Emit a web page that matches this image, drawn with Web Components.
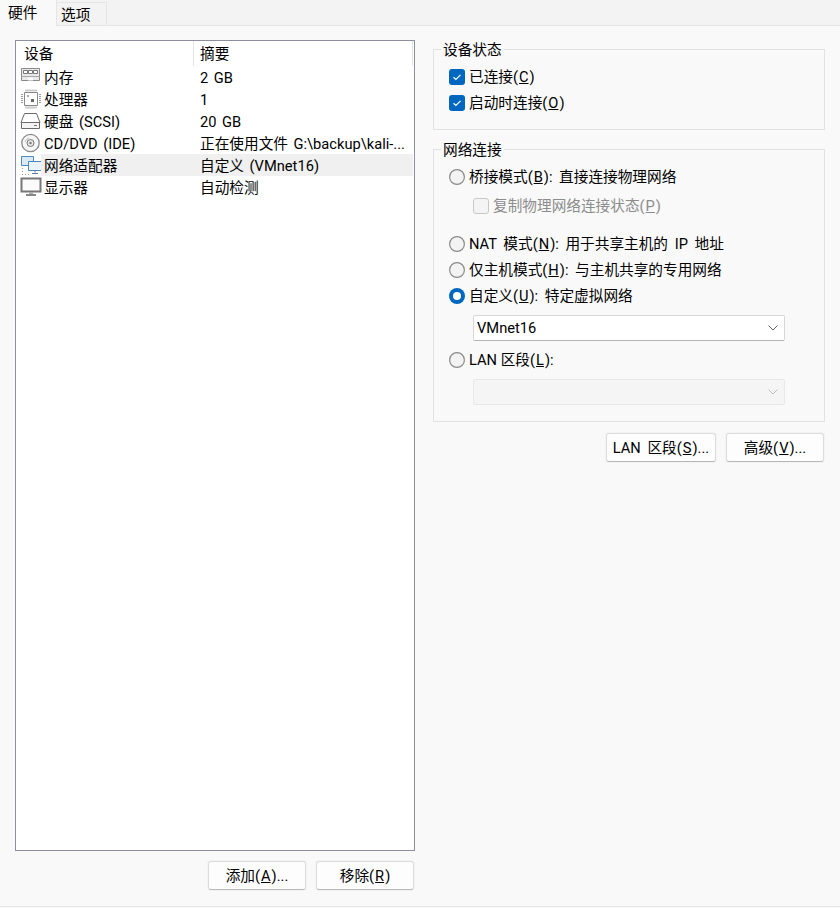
<!DOCTYPE html>
<html lang="zh-CN">
<head>
<meta charset="utf-8">
<style>
  html, body { margin: 0; height: 908px; overflow: hidden; background: #f9f9f9; }
</style>
</head>
<body>
<vm-settings></vm-settings>

<script>
const FONT = `14.67px/22px Roboto, "Noto Sans CJK SC", sans-serif`;

// underlined access key, written as _X in labels
function keyed(label) {
  return label.replace(/_(.)/g, '<u style="margin:0 1px">$1</u>');
}

class VmTabs extends HTMLElement {
  connectedCallback() {
    this.attachShadow({ mode: 'open' }).innerHTML = `
      <style>
        :host { display: flex; height: 26px; box-sizing: border-box; border-bottom: 1px solid #e5e5e5; background: #f3f3f3; font: ${FONT}; }
        span { box-sizing: border-box; display: block; }
        .on { width: 57px; height: 26px; background: #f9f9f9; padding: 2px 0 0 8px; border-right: 1px solid #e5e5e5; }
        .off { width: 50px; height: 23px; margin-top: 2px; padding: 1px 0 0 4px; background: #f3f3f3; border: 1px solid #e5e5e5; border-width: 1px 1px 0 0; }
      </style>
      <span class="on">硬件</span><span class="off">选项</span>`;
  }
}

const ICONS = {
  ram: `<path d="M1.500 1.500h18v12h-18z" fill="#e9e9e9" stroke="#8a8a8a"/>
    <path d="M3.500 3.500h4v3h-4zM8.500 3.500h4v3h-4zM13.500 3.500h4v3h-4z" fill="#fff" stroke="#777"/>
    <path d="M1.500 9.500h18" stroke="#a8a8a8"/><path d="M8 10.500h5v3H8z" fill="#fff"/>`,
  cpu: `<path d="M4.500 3.500h13v13h-13z" fill="#fff" stroke="#8a8a8a"/>
    <path d="M6 .5v2M8 .5v2M10 .5v2M12 .5v2M14 .5v2M16 .5v2M6 17.500v2M8 17.500v2M10 17.500v2M12 17.500v2M14 17.500v2M16 17.500v2M1 5.500h2M1 7.500h2M1 9.500h2M1 11.500h2M1 13.500h2M19 5.500h2M19 7.500h2M19 9.500h2M19 11.500h2M19 13.500h2" stroke="#9a9a9a" fill="none"/>
    <path d="M7 6h2v2H7z" fill="#aaa"/><path d="M11 10h3v3h-3z" fill="#666"/>`,
  disk: `<path d="M4.500 2.500h12l3.500 9H1z" fill="#fff" stroke="#6a6a6a"/>
    <path d="M1.500 11.500h18v6h-18z" fill="#f4f4f4" stroke="#6a6a6a" stroke-linejoin="round"/>
    <path d="M14 14.500h3" stroke="#777"/>`,
  cd: `<circle cx="10.500" cy="10" r="8.700" fill="#f6f6f6" stroke="#8a8a8a" stroke-width="1.300"/>
    <circle cx="10.500" cy="10" r="3.500" fill="#e8e8e8" stroke="#777"/>
    <circle cx="10.500" cy="10" r="1.200" fill="#777"/>
    <path d="M5 9a6 6 0 0 1 4-4" fill="none" stroke="#bbb"/>`,
  net: `<path d="M1.500 1.500h12v9h-12z" fill="#dbeaf7" stroke="#4c88bb"/>
    <path d="M8.500 6.500h13v9h-13z" fill="#eaf3fb" stroke="#4c88bb"/>
    <path d="M15 15.500v2M12 18.500h6" stroke="#5b7f9d"/>
    <path d="M2 13.500h1M2 16.500h1M2 19.500h1M5 19.500h1M8 19.500h1" stroke="#999"/>`,
  monitor: `<path d="M1.500 1.500h19v13h-19z" fill="#fbfbfb" stroke="#777" stroke-width="2"/>
    <path d="M6 18h10" stroke="#888" stroke-width="2"/><path d="M9 15.500h4v1.500H9z" fill="#aaa"/>`
};

class VmDeviceRow extends HTMLElement {
  connectedCallback() {
    const icon = this.getAttribute('icon');
    this.attachShadow({ mode: 'open' }).innerHTML = `
      <style>
        :host { display: flex; height: 22px; font: ${FONT}; line-height: 24px; word-spacing: 2px; white-space: nowrap; }
        svg { width: 22px; height: 20px; margin: 1px -1px 0 4px; flex: none; }
        .name { width: 151px; flex: none; padding-left: 3px; box-sizing: border-box; }
        .value { padding-left: 8px; flex: 1; margin-right: 1px; }
        .name, .value { overflow: hidden; }
        :host([selected]) .name, :host([selected]) .value { background: #f0f0f0; }
      </style>
      <svg viewBox="0 0 22 20">${ICONS[icon]}</svg>
      <span class="name"><slot name="name"></slot></span>
      <span class="value"><slot name="value"></slot></span>`;
  }
}

class VmDeviceList extends HTMLElement {
  connectedCallback() {
    this.attachShadow({ mode: 'open' }).innerHTML = `
      <style>
        :host { display: block; box-sizing: border-box; width: 400px; height: 811px; background: #fff; border: 1px solid #8e8f9e; font: ${FONT}; }
        .head { display: flex; height: 25px; line-height: 26px; }
        .head span { display: block; }
        .a { width: 178px; padding-left: 8px; box-sizing: border-box; border-right: 1px solid #e5e5e5; height: 25px; }
        .b { padding-left: 6px; flex: 1; }
        .edge { width: 1px; height: 25px; background: #e5e5e5; margin-right: 1px; }
      </style>
      <div class="head"><span class="a">设备</span><span class="b">摘要</span><i class="edge"></i></div>
      <slot></slot>`;
  }
}

class VmGroup extends HTMLElement {
  connectedCallback() {
    this.attachShadow({ mode: 'open' }).innerHTML = `
      <style>
        :host { display: block; position: relative; box-sizing: border-box; border: 1px solid #e2e2e2; font: ${FONT}; }
        .title { position: absolute; left: 7px; top: -11px; padding: 0 2px; background: #f9f9f9; }
      </style>
      <span class="title">${this.getAttribute('label')}</span>
      <slot></slot>`;
  }
}

class VmCheck extends HTMLElement {
  connectedCallback() {
    const on = this.hasAttribute('checked');
    this.attachShadow({ mode: 'open' }).innerHTML = `
      <style>
        :host { display: flex; align-items: center; height: 22px; gap: 4px; font: ${FONT}; }
        :host([disabled]) { color: #8c8c8c; }
        i { width: 16px; height: 16px; box-sizing: border-box; border-radius: 3px; flex: none; display: block; }
        .on { background: #0067c0; }
        .off { background: #f4f4f4; border: 1px solid #c8c8c8; }
        svg { display: block; }
      </style>
      <i class="${on ? 'on' : 'off'}">${on ? '<svg width="16" height="16" viewBox="0 0 16 16"><path d="M4.500 8.200l2.400 2.300 4.600-4.700" fill="none" stroke="#fff" stroke-width="1.200"/></svg>' : ''}</i>
      <span>${keyed(this.getAttribute('label'))}</span>`;
  }
}

class VmRadio extends HTMLElement {
  connectedCallback() {
    const on = this.hasAttribute('checked');
    this.attachShadow({ mode: 'open' }).innerHTML = `
      <style>
        :host { display: flex; align-items: center; height: 22px; gap: 4px; font: ${FONT}; word-spacing: 3px; white-space: pre; }
        svg { flex: none; display: block; }
      </style>
      <svg width="16" height="16" viewBox="0 0 16 16">${on
        ? '<circle cx="8" cy="8" r="8" fill="#0067c0"/><circle cx="8" cy="8" r="4" fill="#fff"/>'
        : '<circle cx="8" cy="8" r="7.400" fill="#f3f3f3" stroke="#8a8a8a" stroke-width="1.200"/>'}</svg>
      <span>${keyed(this.getAttribute('label'))}</span>`;
  }
}

class VmCombo extends HTMLElement {
  connectedCallback() {
    this.attachShadow({ mode: 'open' }).innerHTML = `
      <style>
        :host { display: flex; align-items: center; justify-content: space-between; box-sizing: border-box; width: 312px; height: 26px; padding: 0 5px 0 3px; background: #fff; border: 1px solid #d8d8d8; border-bottom-color: #b5b5b5; border-radius: 2px; font: ${FONT}; line-height: 24px; }
        :host([disabled]) { background: #f5f5f5; border-color: #e8e8e8; }
        :host([disabled]) path { stroke: #bdbdbd; }
        svg { display: block; }
      </style>
      <span><slot></slot></span>
      <svg width="12" height="12" viewBox="0 0 12 12"><path d="M1.500 3.500L6 8l4.500-4.500" fill="none" stroke="#606060"/></svg>`;
  }
}

class VmButton extends HTMLElement {
  connectedCallback() {
    this.attachShadow({ mode: 'open' }).innerHTML = `
      <style>
        :host { display: flex; align-items: center; justify-content: center; box-sizing: border-box; height: 29px; background: #fdfdfd; border: 1px solid #dcdcdc; border-bottom-color: #b8b8b8; border-radius: 3px; box-shadow: 0 0 0 1px #f3f3f3; font: ${FONT}; word-spacing: 3px; white-space: pre; }
      </style>
      <span>${keyed(this.getAttribute('label'))}</span>`;
  }
}

class VmSettings extends HTMLElement {
  connectedCallback() {
    this.attachShadow({ mode: 'open' }).innerHTML = `
      <style>
        :host { display: block; height: 908px; box-sizing: border-box; background: #f9f9f9; font: ${FONT}; }
        .body { display: flex; height: 881px; box-sizing: border-box; padding: 14px 16px 0 15px; border-bottom: 1px solid #e5e5e5; }
        .left { width: 400px; flex: none; }
        .right { width: 392px; margin-left: 18px; flex: none; padding-top: 9px; }
        .actions { display: flex; justify-content: flex-end; gap: 10px; }
        .left .actions { margin: 10px 1px 0 0; }
        .right .actions { margin: 11px 1px 0 0; }
        vm-button { width: 98px; }
        .status { height: 81px; padding: 16px 15px 0; }
        .status vm-check + vm-check { margin-top: 4px; }
        .net { height: 273px; margin-top: 19px; padding: 16px 15px 0; }
        .net vm-radio { margin-bottom: 4px; }
        .sub { margin: 7px 0 16px 24px; }
        .net vm-combo { margin: 8px 0 8px 24px; }
      </style>
      <vm-tabs></vm-tabs>
      <div class="body">
        <div class="left">
          <vm-device-list>
            <vm-device-row icon="ram"><span slot="name">内存</span><span slot="value">2 GB</span></vm-device-row>
            <vm-device-row icon="cpu"><span slot="name">处理器</span><span slot="value">1</span></vm-device-row>
            <vm-device-row icon="disk"><span slot="name">硬盘 (SCSI)</span><span slot="value">20 GB</span></vm-device-row>
            <vm-device-row icon="cd"><span slot="name">CD/DVD (IDE)</span><span slot="value">正在使用文件 G:\\backup\\kali-...</span></vm-device-row>
            <vm-device-row icon="net" selected><span slot="name">网络适配器</span><span slot="value">自定义 (VMnet16)</span></vm-device-row>
            <vm-device-row icon="monitor"><span slot="name">显示器</span><span slot="value">自动检测</span></vm-device-row>
          </vm-device-list>
          <div class="actions">
            <vm-button label="添加(_A)..."></vm-button>
            <vm-button label="移除(_R)"></vm-button>
          </div>
        </div>
        <div class="right">
          <vm-group class="status" label="设备状态">
            <vm-check checked label="已连接(_C)"></vm-check>
            <vm-check checked label="启动时连接(_O)"></vm-check>
          </vm-group>
          <vm-group class="net" label="网络连接">
            <vm-radio label="桥接模式(_B): 直接连接物理网络"></vm-radio>
            <vm-check class="sub" disabled label="复制物理网络连接状态(_P)"></vm-check>
            <vm-radio label="NAT 模式(_N): 用于共享主机的 IP 地址"></vm-radio>
            <vm-radio label="仅主机模式(_H): 与主机共享的专用网络"></vm-radio>
            <vm-radio checked label="自定义(_U): 特定虚拟网络"></vm-radio>
            <vm-combo>VMnet16</vm-combo>
            <vm-radio style="word-spacing:0" label="LAN 区段(_L):"></vm-radio>
            <vm-combo disabled></vm-combo>
          </vm-group>
          <div class="actions">
            <vm-button style="width:110px" label="LAN 区段(_S)..."></vm-button>
            <vm-button label="高级(_V)..."></vm-button>
          </div>
        </div>
      </div>`;
  }
}

customElements.define('vm-tabs', VmTabs);
customElements.define('vm-device-row', VmDeviceRow);
customElements.define('vm-device-list', VmDeviceList);
customElements.define('vm-group', VmGroup);
customElements.define('vm-check', VmCheck);
customElements.define('vm-radio', VmRadio);
customElements.define('vm-combo', VmCombo);
customElements.define('vm-button', VmButton);
customElements.define('vm-settings', VmSettings);
</script>
</body>
</html>
